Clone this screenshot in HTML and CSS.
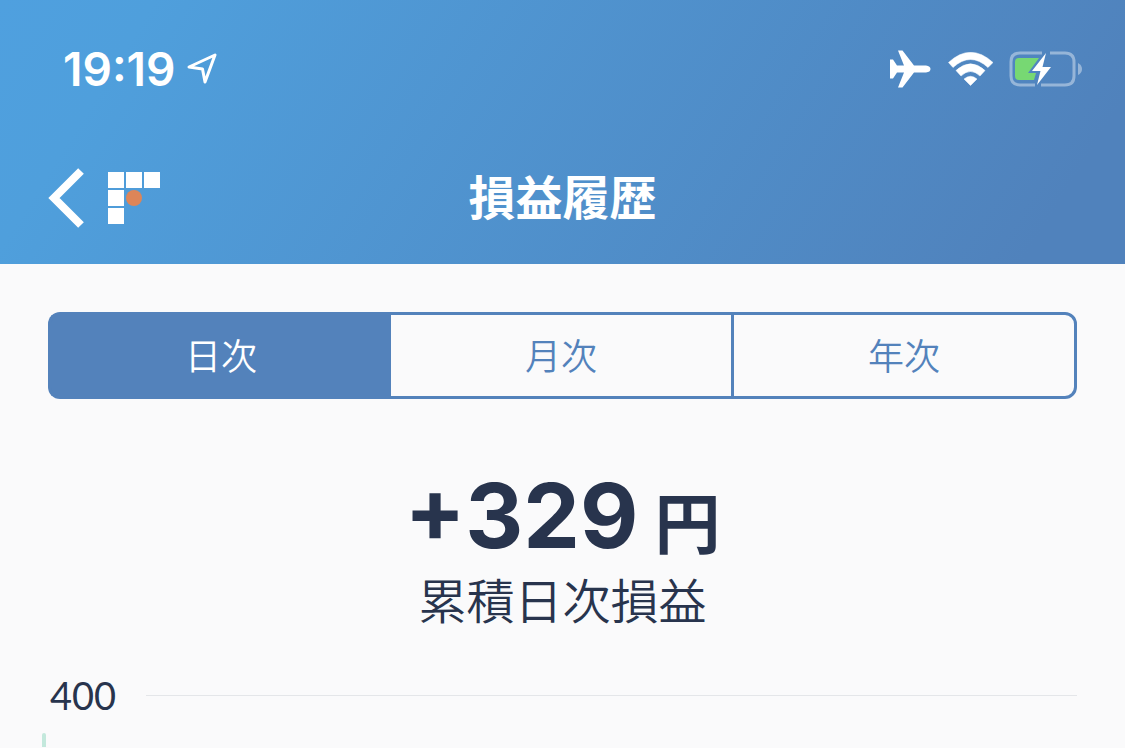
FILE: index.html
```
<!DOCTYPE html>
<html lang="ja">
    <head>
        <meta charset="utf-8">
        <meta name="viewport" content="width=device-width, initial-scale=1">
        <title>損益履歴</title>
        <link rel="stylesheet" href="styles.css">
    </head>
    <body>
        <header class="header">
            <div class="status-bar">
                <div class="status-left">
                    <span class="time">19:19</span>
                    <svg width="30" height="32" viewBox="0 0 30 32">
                        <path d="M2 14 L28 2 L18 29 L15.500 16 Z" fill="none" stroke="#fff" stroke-width="3" stroke-linejoin="round"/>
                    </svg>
                </div>
                <div class="status-right">
                    <svg width="42" height="38" viewBox="0 0 42 38">
                        <path d="M1 9.500 H4 L8 15.500 H15 L9 0.500 H13.500 L25 15.500 H37 Q41.500 16 41.500 19 Q41.500 22 37 22.500 H25 L13.500 37.500 H9 L15 22.500 H8 L4 28.500 H1 Z" fill="#fff"/>
                    </svg>
                    <svg class="wifi" width="46" height="34" viewBox="0 0 46 34">
                        <path d="M1.500 10.500 Q23.500 -10 46 10.500 L41 15.500 Q23.500 -0.500 6 15.500 Z M9 18.500 Q23.500 5 38 18.500 L33 24 Q23.500 15 14 24 Z M17 27 Q23.500 21.500 30 27 L23.500 33.500 Z" fill="#fff" stroke="#fff" stroke-width="0.500" stroke-linejoin="round"/>
                    </svg>
                    <svg width="74" height="40" viewBox="0 0 74 40">
                        <path d="M33 4 H11 Q2 4 2 13 V27 Q2 36 11 36 H26 M41 4 H56 Q65 4 65 13 V27 Q65 36 56 36 H32" fill="none" stroke="#fff" stroke-opacity="0.4" stroke-width="3"/>
                        <path d="M69 14 Q73 16 73 20 Q73 24 69 26 Z" fill="#fff" fill-opacity="0.4"/>
                        <path d="M10 9 H30 L19 24 H27 L25 31 H10 Q6 31 6 27 V13 Q6 9 10 9 Z" fill="#77d873"/>
                        <path d="M37 4 L23 22 H31.500 L28 36 L42 18 H33.500 Z" fill="#fff"/>
                    </svg>
                </div>
            </div>
            <nav class="nav-bar">
                <div class="nav-left">
                    <button class="back" aria-label="戻る">
                        <svg width="36" height="60" viewBox="0 0 36 60">
                            <path d="M33 3 L6 30 L33 57" fill="none" stroke="#fff" stroke-width="8"/>
                        </svg>
                    </button>
                    <svg width="52" height="52" viewBox="0 0 52 52">
                        <path d="M0 0 H16 V16 H0 Z M18 0 H34 V16 H18 Z M36 0 H52 V16 H36 Z M0 18 H16 V34 H0 Z M0 36 H16 V52 H0 Z" fill="#fff"/>
                        <circle cx="26" cy="26" r="8" fill="#dd8558"/>
                    </svg>
                </div>
                <h1>損益履歴</h1>
            </nav>
        </header>
        <main>
            <div class="tabs">
                <button class="tab active">日次</button>
                <button class="tab">月次</button>
                <button class="tab">年次</button>
            </div>
            <div class="summary">
                <p class="amount">+329<span class="unit">円</span></p>
                <p class="label">累積日次損益</p>
            </div>
            <div class="chart">
                <div class="axis-row">
                    <span class="axis-label">400</span>
                    <div class="grid-line"></div>
                </div>
                <div class="bar"></div>
            </div>
        </main>
    </body>
</html>
```

FILE: styles.css
```
body {
    font-family: Inter, "Noto Sans CJK JP", sans-serif;
    margin: 0;
    background-color: #fafafb;
    color: #28344d;
}
button {
    font-family: inherit;
    border: none;
    background: none;
    padding: 0;
    cursor: pointer;
}
svg {
    display: block;
}
.header {
    background: linear-gradient(122deg, #4fa0df 0%, #4f9fdc 12%, #5082bc 92%);
    color: #fff;
}
.status-bar {
    display: flex;
    justify-content: space-between;
    align-items: center;
    box-sizing: border-box;
    height: 132px;
    padding: 6px 42px 0 63px;
}
.status-left,
.status-right {
    display: flex;
    align-items: center;
}
.status-left {
    gap: 12px;
}
.status-right {
    gap: 16px;
}
.time {
    font-size: 46px;
    font-weight: 600;
}
.nav-bar {
    display: grid;
    grid-template-columns: 1fr auto 1fr;
    align-items: center;
    height: 132px;
    padding: 0 48px;
}
.nav-left {
    display: flex;
    align-items: center;
    gap: 24px;
}
h1 {
    margin: 0;
    font-size: 47px;
    font-weight: 600;
    line-height: 60px;
}
main {
    padding: 48px 48px 0;
}
.tabs {
    display: flex;
}
.tab {
    flex: 1;
    box-sizing: content-box;
    height: 77px;
    padding-bottom: 4px;
    border: solid #5382bb;
    border-width: 3px 0;
    font-size: 36px;
    font-weight: 350;
    color: #5382bb;
}
.tab:first-child {
    border-left-width: 3px;
    border-radius: 12px 0 0 12px;
}
.tab:last-child {
    border-right-width: 3px;
    border-left-width: 3px;
    border-radius: 0 12px 12px 0;
}
.tab.active {
    background-color: #5382bb;
    color: #fff;
}
.summary {
    text-align: center;
    padding-top: 72px;
}
.summary p {
    margin: 0;
}
.amount {
    font-size: 90px;
    font-weight: 700;
    line-height: 90px;
}
.unit {
    font-size: 66px;
    margin-left: 16px;
}
.label {
    font-size: 48px;
    font-weight: 350;
    line-height: 66px;
}
.axis-row {
    display: flex;
    align-items: center;
    gap: 30px;
    margin-top: 36px;
    padding-left: 2px;
}
.axis-label {
    font-family: Lato, sans-serif;
    font-size: 38px;
    line-height: 48px;
}
.grid-line {
    flex: 1;
    height: 1px;
    background-color: #e4e6e9;
}
.bar {
    width: 4px;
    height: 14px;
    margin: 14px 0 0 -6px;
    border-radius: 2px 2px 0 0;
    background-color: #c3e8dc;
}
```
